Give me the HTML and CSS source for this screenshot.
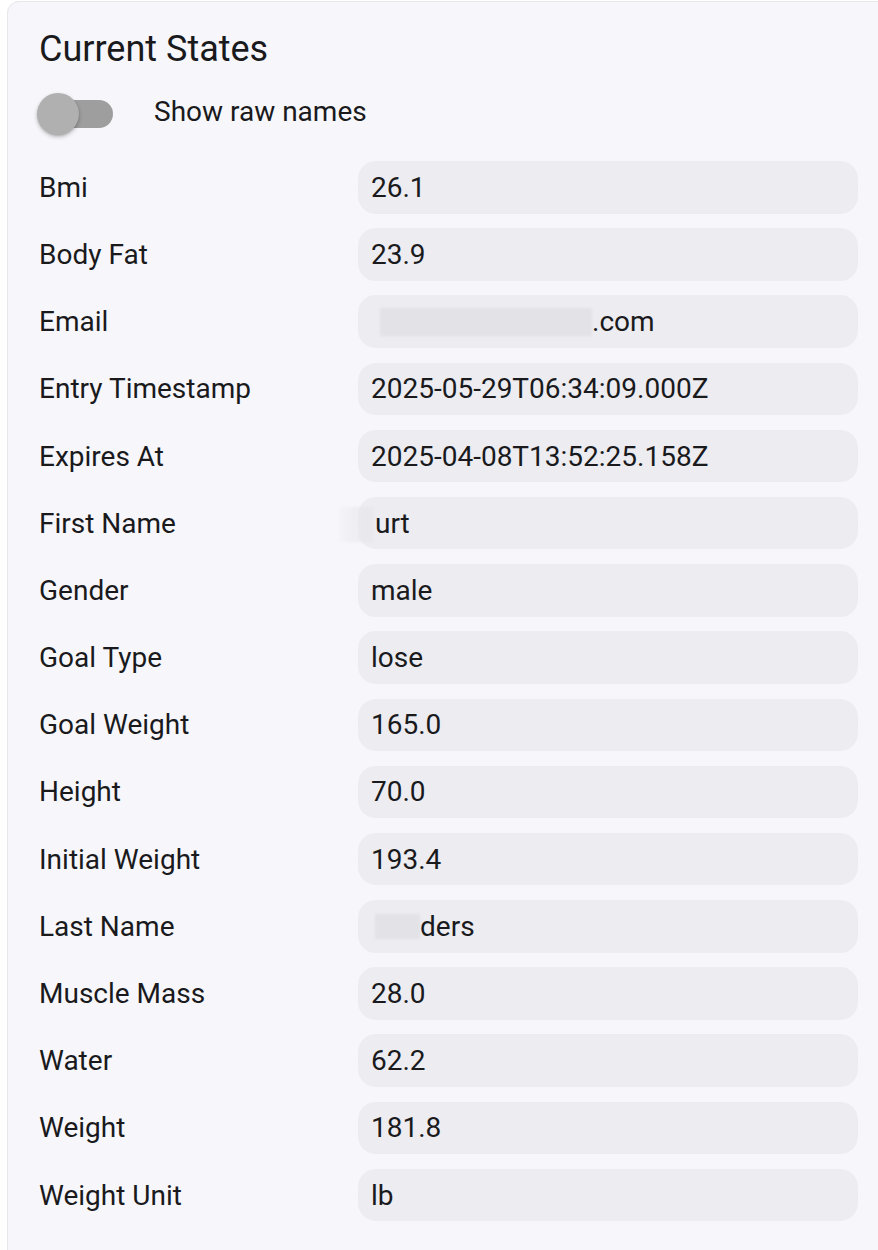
FILE: index.html
```html
<!DOCTYPE html>
<html lang="en">
<head>
<meta charset="utf-8">
<title>Current States</title>
<link rel="stylesheet" href="styles.css">
</head>
<body>
<section class="card">
  <h2 class="title">Current States</h2>
  <div class="toggle-row">
    <span class="switch" aria-hidden="true"><span class="track"></span><span class="thumb"></span></span>
    <span class="toggle-label">Show raw names</span>
  </div>
  <div class="rows">
    <div class="label">Bmi</div><div class="value">26.1</div>
    <div class="label">Body Fat</div><div class="value">23.9</div>
    <div class="label">Email</div><div class="value"><span class="redact redact-email" aria-hidden="true"></span>.com</div>
    <div class="label">Entry Timestamp</div><div class="value">2025-05-29T06:34:09.000Z</div>
    <div class="label">Expires At</div><div class="value">2025-04-08T13:52:25.158Z</div>
    <div class="label">First Name</div><div class="value"><span class="redact-wrap"><span class="redact redact-first" aria-hidden="true"></span></span>urt</div>
    <div class="label">Gender</div><div class="value">male</div>
    <div class="label">Goal Type</div><div class="value">lose</div>
    <div class="label">Goal Weight</div><div class="value">165.0</div>
    <div class="label">Height</div><div class="value">70.0</div>
    <div class="label">Initial Weight</div><div class="value">193.4</div>
    <div class="label">Last Name</div><div class="value"><span class="redact redact-last" aria-hidden="true"></span>ders</div>
    <div class="label">Muscle Mass</div><div class="value">28.0</div>
    <div class="label">Water</div><div class="value">62.2</div>
    <div class="label">Weight</div><div class="value">181.8</div>
    <div class="label">Weight Unit</div><div class="value">lb</div>
  </div>
</section>
</body>
</html>
```

FILE: styles.css
```css
html, body {
  margin: 0;
  padding: 0;
  background: #ffffff;
  overflow: hidden;
}

body {
  font-family: Roboto, "Liberation Sans", sans-serif;
  color: #1a1a1d;
}

.card {
  box-sizing: border-box;
  width: 883px;
  margin: 1px 0 0 7px;
  padding: 26px 31px 60px;
  background: #f7f7fb;
  border: 1px solid #e6e6eb;
  border-radius: 12px;
}

.title {
  margin: 0;
  font-size: 36px;
  line-height: 42px;
  font-weight: 400;
}

.toggle-row {
  display: flex;
  align-items: center;
  gap: 40px;
  height: 42px;
  margin-top: 23px;
}

.switch {
  position: relative;
  display: block;
  flex: none;
  width: 77px;
  height: 42px;
  margin-left: -2px;
}

.track {
  position: absolute;
  left: 7px;
  top: 7px;
  width: 69px;
  height: 28px;
  border-radius: 14px;
  background: #9e9e9e;
}

.thumb {
  position: absolute;
  left: 0;
  top: 0;
  width: 42px;
  height: 42px;
  border-radius: 50%;
  background: #b0b0b0;
  box-shadow: 0 2px 4px rgba(0, 0, 0, 0.22), 0 1px 2px rgba(0, 0, 0, 0.12);
}

.toggle-label {
  font-size: 28px;
  line-height: 33px;
  margin-bottom: 6px;
}

.rows {
  display: grid;
  grid-template-columns: 319px 1fr;
  row-gap: 14.7px;
  align-items: center;
  margin-top: 26px;
}

.label {
  font-size: 28px;
  line-height: 33px;
}

.value {
  display: flex;
  align-items: center;
  height: 52.5px;
  box-sizing: border-box;
  padding: 0 13px;
  border-radius: 18px;
  background: #ececf1;
  font-size: 28px;
  line-height: 33px;
  white-space: nowrap;
}

.redact {
  display: inline-block;
  flex: none;
  background: #e3e3e7;
  filter: blur(1px);
}

.redact-email {
  width: 212px;
  height: 28px;
  margin-left: 9px;
}

.redact-wrap {
  position: relative;
  display: inline-block;
  width: 4px;
  height: 28px;
}

.redact-first {
  position: absolute;
  left: -32px;
  top: -2px;
  width: 34px;
  height: 35px;
  background: linear-gradient(to right, rgba(235, 235, 239, 0.2), #e8e8ec);
}

.redact-last {
  width: 45px;
  height: 25px;
  margin-left: 4px;
}
```
